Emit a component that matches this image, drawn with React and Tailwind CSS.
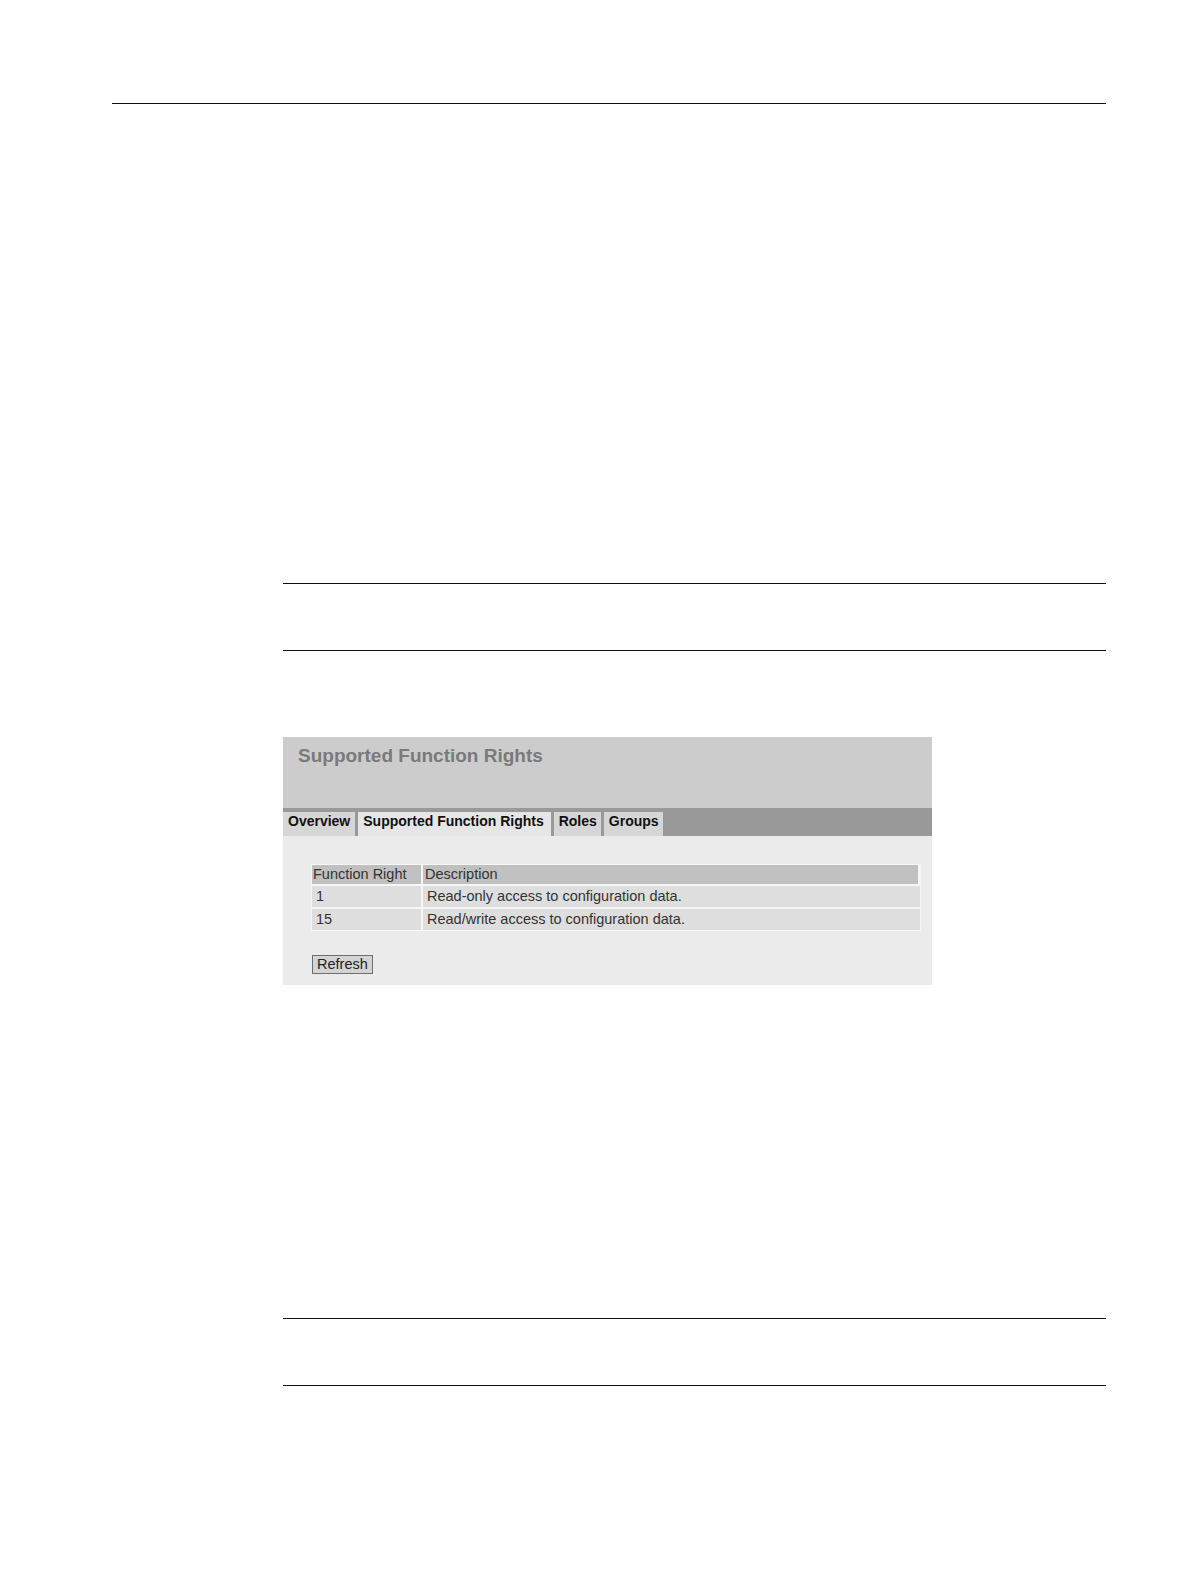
export default function App() {
  const tabs = [
    { label: "Overview", cls: "pl-[5px] pr-[5px] bg-[#d6d6d6]" },
    { label: "Supported Function Rights", cls: "pl-[5px] pr-[7px] bg-[#e6e6e6]" },
    { label: "Roles", cls: "pl-[5px] pr-[4px] bg-[#d6d6d6]" },
    { label: "Groups", cls: "pl-[5px] pr-[4px] bg-[#d6d6d6]" },
  ];
  const rows = [
    ["1", "Read-only access to configuration data."],
    ["15", "Read/write access to configuration data."],
  ];
  return (
    <div
      className="w-[1191px] min-h-[1587px] bg-white overflow-hidden"
      style={{ fontFamily: '"Liberation Sans", Arial, sans-serif' }}
    >
      <div className="pt-[103px]">
        <div className="ml-[112px] w-[994px] h-px bg-[#111]" />
      </div>
      <div className="mt-[479px] ml-[283px] w-[823px] h-px bg-[#111]" />
      <div className="mt-[66px] ml-[283px] w-[823px] h-px bg-[#111]" />

      <div className="mt-[86px] ml-[283px] w-[649px]">
        <div className="h-[71px] bg-[#cccccc] pl-[15px] pt-[8px]">
          <div className="text-[19px] leading-[22px] font-bold text-[#7a7a7a]">
            Supported Function Rights
          </div>
        </div>
        <div className="h-[28px] bg-[#999999] flex items-end gap-[3px] pl-0">
          {tabs.map((t) => (
            <div
              key={t.label}
              className={
                "h-[24px] text-[14px] leading-[19px] font-bold text-[#111] " + t.cls
              }
            >
              {t.label}
            </div>
          ))}
        </div>
        <div className="bg-[#ebebeb] pt-[28px] pl-[28px] pr-[11px] pb-[9px]">
          <div className="bg-[#f6f6f6] p-px grid grid-cols-[109px_1fr] gap-[2px] text-[14.5px] text-[#333]">
            <div className="h-[19px] leading-[19px] bg-[#c0c0c0] pl-[1px]">Function Right</div>
            <div className="h-[19px] leading-[19px] bg-[#c0c0c0] pl-[2px] mr-[2px]">Description</div>
            {rows.map((r) => [
              <div key={r[0] + "a"} className="h-[21px] leading-[21px] bg-[#dedede] pl-[4px]">
                {r[0]}
              </div>,
              <div key={r[0] + "b"} className="h-[21px] leading-[21px] bg-[#dedede] pl-[4px]">
                {r[1]}
              </div>,
            ])}
          </div>
          <div className="mt-[21px] pl-px">
            <button className="h-[19px] px-[4px] leading-[17px] text-[14.5px] text-[#222] bg-[#d4d4d4] border border-[#6e6e6e]">
              Refresh
            </button>
          </div>
        </div>
      </div>

      <div className="mt-[333px] ml-[283px] w-[823px] h-px bg-[#111]" />
      <div className="mt-[66px] ml-[283px] w-[823px] h-px bg-[#111]" />
    </div>
  );
}
